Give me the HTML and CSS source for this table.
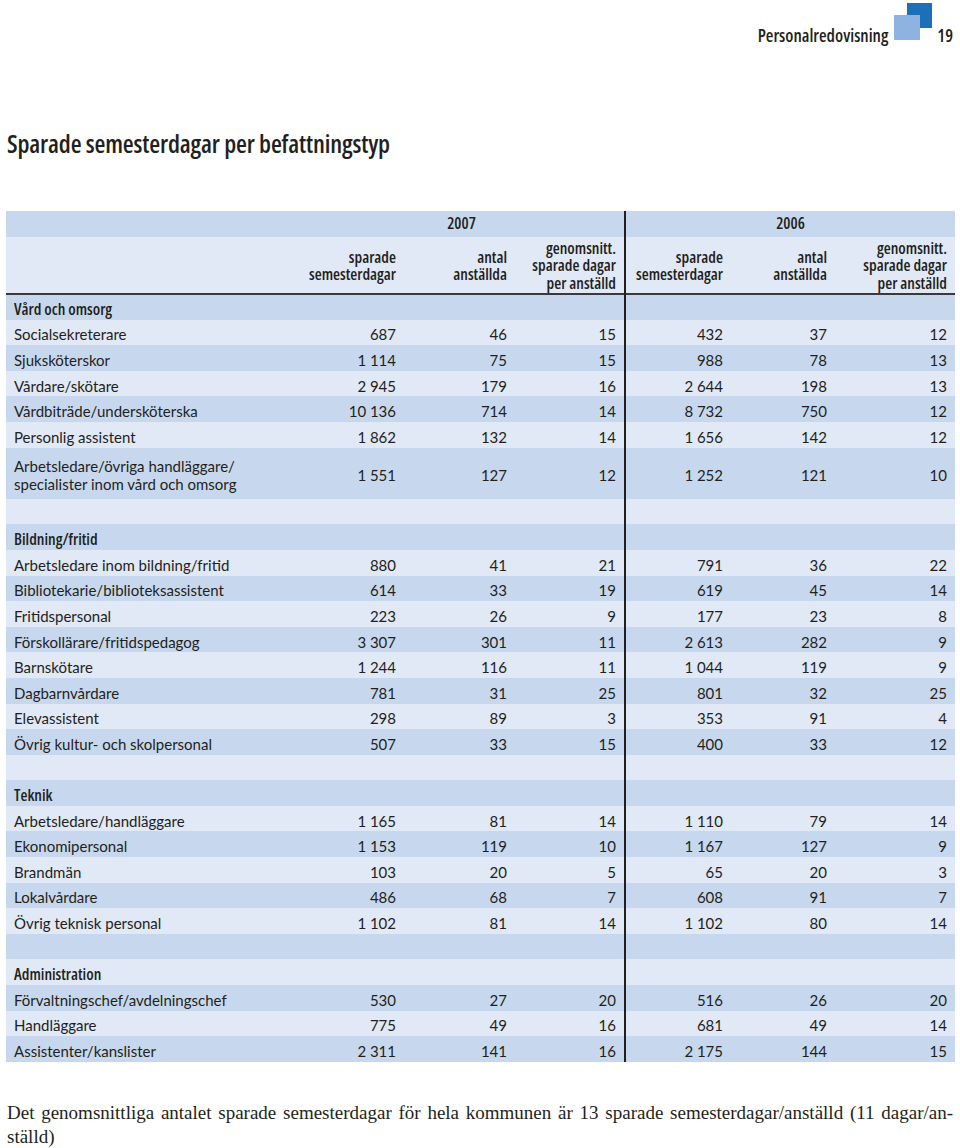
FILE: index.html
```html
<!DOCTYPE html>
<html lang="sv">
<head>
<meta charset="utf-8">
<title>Sparade semesterdagar per befattningstyp</title>
<link rel="stylesheet" href="styles.css">
</head>
<body>
<header class="top">
  <span class="section">Personalredovisning</span>
  <svg class="logo" width="40" height="42" viewBox="0 0 40 42" aria-hidden="true">
    <rect x="14" y="3" width="25" height="25" fill="#1d6fb8"/>
    <rect x="1" y="15" width="26" height="25" fill="#8fb3e1"/>
  </svg>
  <span class="page">19</span>
</header>

<h1 class="title">Sparade semesterdagar per befattningstyp</h1>

<table class="data">
  <colgroup>
    <col class="c-label">
    <col class="c1"><col class="c2"><col class="c3">
    <col class="c4"><col class="c5"><col class="c6">
  </colgroup>
  <thead>
    <tr class="yr">
      <th class="blank"></th>
      <th colspan="3" class="year">2007</th>
      <th colspan="3" class="year sep">2006</th>
    </tr>
    <tr class="sub">
      <th class="blank"></th>
      <th><span class="hl">sparade</span><span class="hl">semesterdagar</span></th>
      <th><span class="hl">antal</span><span class="hl">anställda</span></th>
      <th><span class="hl">genomsnitt.</span><span class="hl">sparade dagar</span><span class="hl">per anställd</span></th>
      <th class="sep"><span class="hl">sparade</span><span class="hl">semesterdagar</span></th>
      <th><span class="hl">antal</span><span class="hl">anställda</span></th>
      <th><span class="hl">genomsnitt.</span><span class="hl">sparade dagar</span><span class="hl">per anställd</span></th>
    </tr>
  </thead>
  <tbody>
    <tr class="group"><td>Vård och omsorg</td><td></td><td></td><td></td><td class="sep"></td><td></td><td></td></tr>
    <tr><td>Socialsekreterare</td><td>687</td><td>46</td><td>15</td><td class="sep">432</td><td>37</td><td>12</td></tr>
    <tr><td>Sjuksköterskor</td><td>1&#8239;114</td><td>75</td><td>15</td><td class="sep">988</td><td>78</td><td>13</td></tr>
    <tr><td>Vårdare/skötare</td><td>2&#8239;945</td><td>179</td><td>16</td><td class="sep">2&#8239;644</td><td>198</td><td>13</td></tr>
    <tr><td>Vårdbiträde/undersköterska</td><td>10&#8239;136</td><td>714</td><td>14</td><td class="sep">8&#8239;732</td><td>750</td><td>12</td></tr>
    <tr><td>Personlig assistent</td><td>1&#8239;862</td><td>132</td><td>14</td><td class="sep">1&#8239;656</td><td>142</td><td>12</td></tr>
    <tr class="tall"><td>Arbetsledare/övriga handläggare/<br>specialister inom vård och omsorg</td><td>1&#8239;551</td><td>127</td><td>12</td><td class="sep">1&#8239;252</td><td>121</td><td>10</td></tr>
    <tr class="empty"><td></td><td></td><td></td><td></td><td class="sep"></td><td></td><td></td></tr>

    <tr class="group"><td>Bildning/fritid</td><td></td><td></td><td></td><td class="sep"></td><td></td><td></td></tr>
    <tr><td>Arbetsledare inom bildning/fritid</td><td>880</td><td>41</td><td>21</td><td class="sep">791</td><td>36</td><td>22</td></tr>
    <tr><td>Bibliotekarie/biblioteksassistent</td><td>614</td><td>33</td><td>19</td><td class="sep">619</td><td>45</td><td>14</td></tr>
    <tr><td>Fritidspersonal</td><td>223</td><td>26</td><td>9</td><td class="sep">177</td><td>23</td><td>8</td></tr>
    <tr><td>Förskollärare/fritidspedagog</td><td>3&#8239;307</td><td>301</td><td>11</td><td class="sep">2&#8239;613</td><td>282</td><td>9</td></tr>
    <tr><td>Barnskötare</td><td>1&#8239;244</td><td>116</td><td>11</td><td class="sep">1&#8239;044</td><td>119</td><td>9</td></tr>
    <tr><td>Dagbarnvårdare</td><td>781</td><td>31</td><td>25</td><td class="sep">801</td><td>32</td><td>25</td></tr>
    <tr><td>Elevassistent</td><td>298</td><td>89</td><td>3</td><td class="sep">353</td><td>91</td><td>4</td></tr>
    <tr><td>Övrig kultur- och skolpersonal</td><td>507</td><td>33</td><td>15</td><td class="sep">400</td><td>33</td><td>12</td></tr>
    <tr class="empty"><td></td><td></td><td></td><td></td><td class="sep"></td><td></td><td></td></tr>

    <tr class="group"><td>Teknik</td><td></td><td></td><td></td><td class="sep"></td><td></td><td></td></tr>
    <tr><td>Arbetsledare/handläggare</td><td>1&#8239;165</td><td>81</td><td>14</td><td class="sep">1&#8239;110</td><td>79</td><td>14</td></tr>
    <tr><td>Ekonomipersonal</td><td>1&#8239;153</td><td>119</td><td>10</td><td class="sep">1&#8239;167</td><td>127</td><td>9</td></tr>
    <tr><td>Brandmän</td><td>103</td><td>20</td><td>5</td><td class="sep">65</td><td>20</td><td>3</td></tr>
    <tr><td>Lokalvårdare</td><td>486</td><td>68</td><td>7</td><td class="sep">608</td><td>91</td><td>7</td></tr>
    <tr><td>Övrig teknisk personal</td><td>1&#8239;102</td><td>81</td><td>14</td><td class="sep">1&#8239;102</td><td>80</td><td>14</td></tr>
    <tr class="empty"><td></td><td></td><td></td><td></td><td class="sep"></td><td></td><td></td></tr>

    <tr class="group"><td>Administration</td><td></td><td></td><td></td><td class="sep"></td><td></td><td></td></tr>
    <tr><td>Förvaltningschef/avdelningschef</td><td>530</td><td>27</td><td>20</td><td class="sep">516</td><td>26</td><td>20</td></tr>
    <tr><td>Handläggare</td><td>775</td><td>49</td><td>16</td><td class="sep">681</td><td>49</td><td>14</td></tr>
    <tr><td>Assistenter/kanslister</td><td>2&#8239;311</td><td>141</td><td>16</td><td class="sep">2&#8239;175</td><td>144</td><td>15</td></tr>
  </tbody>
</table>

<div class="note">
  <p class="note-line">Det genomsnittliga antalet sparade semesterdagar för hela kommunen är 13 sparade semesterdagar/anställd (11 dagar/an-</p>
  <p class="note-last">ställd)</p>
</div>
</body>
</html>
```

FILE: styles.css
```css
html, body {
  margin: 0;
  padding: 0;
  background: #ffffff;
  color: #231f20;
}

body {
  width: 960px;
  font-family: "Lato", "Liberation Sans", sans-serif;
}

/* running header */
.top {
  display: flex;
  justify-content: flex-end;
  align-items: flex-start;
  height: 45px;
  padding-right: 7px;
  font-family: "Open Sans", "Liberation Sans Narrow", sans-serif;
  font-stretch: 75%;
  font-weight: 600;
  font-size: 17.5px;
  line-height: 20px;
}

.section {
  margin-top: 25px;
  margin-right: 5px;
}

.logo {
  display: block;
  margin-right: 4px;
}

.page {
  margin-top: 25px;
}

.title {
  margin: 83px 0 0 7px;
  font-family: "Open Sans", "Liberation Sans Narrow", sans-serif;
  font-stretch: 75%;
  font-weight: 600;
  font-size: 25px;
  line-height: 30px;
  letter-spacing: -0.15px;
}

/* table */
.data {
  margin: 53px 0 0 6px;
  width: 949px;
  border-collapse: collapse;
  table-layout: fixed;
  font-size: 15px;
}

.c-label { width: 293px; }
.c1 { width: 105px; }
.c2 { width: 111px; }
.c3 { width: 110px; }
.c4 { width: 106px; }
.c5 { width: 104px; }
.c6 { width: 120px; }

.data th,
.data td {
  padding: 0 8px;
  text-align: right;
  vertical-align: middle;
  white-space: nowrap;
}

.data th {
  font-family: "Open Sans", "Liberation Sans Narrow", sans-serif;
  font-stretch: 75%;
  font-weight: 600;
  font-size: 16px;
  line-height: 17.5px;
  padding-top: 2px;
}

.data th .hl {
  display: block;
  height: 17.5px;
  line-height: 17.5px;
  overflow: visible;
}

.data .year {
  text-align: center;
  padding: 0;
}

.yr {
  height: 26px;
  background: #c7d8ee;
}

.sub {
  height: 57px;
  background: #e1e8f6;
  border-bottom: 2px solid #3a3a3c;
}

.data .sep {
  border-left: 2px solid #231f20;
}

.data tbody tr {
  height: 25.6px;
}

.data tbody tr:nth-child(odd) {
  background: #c7d8ee;
}

.data tbody tr:nth-child(even) {
  background: #e1e8f6;
}

.data tbody td {
  line-height: 18px;
  padding-top: 4px;
  padding-bottom: 0;
}

.data tbody td:first-child {
  text-align: left;
}

.data tbody tr.tall {
  height: 51.2px;
}

.data tr.group td:first-child {
  font-family: "Open Sans", "Liberation Sans Narrow", sans-serif;
  font-stretch: 75%;
  font-weight: 600;
  font-size: 16px;
}

/* footnote */
.note {
  margin: 39px 7px 0 7px;
  font-family: "Liberation Serif", serif;
  font-size: 19px;
  line-height: 24px;
}

.note p {
  margin: 0;
}

.note-line {
  text-align: justify;
  text-align-last: justify;
}
```
